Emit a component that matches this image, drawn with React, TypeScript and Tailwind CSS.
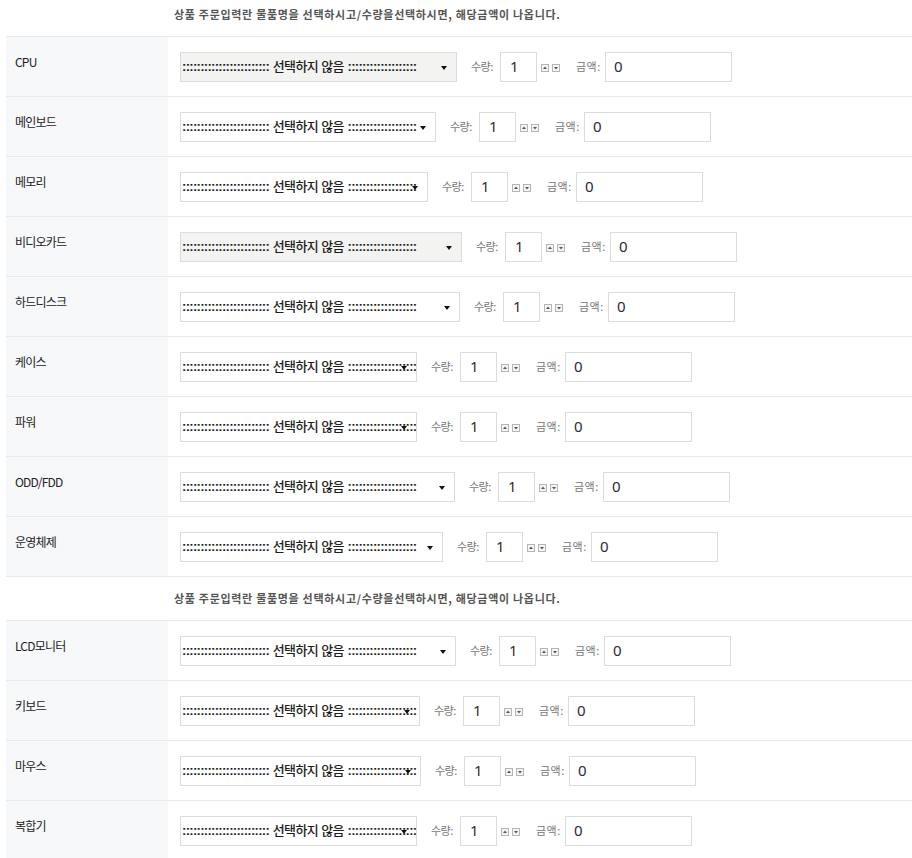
import React from "react";

type Row = { label: string; w: number; gray?: boolean };

const rowsA: Row[] = [
  { label: "CPU", w: 277, gray: true },
  { label: "메인보드", w: 256 },
  { label: "메모리", w: 248 },
  { label: "비디오카드", w: 282, gray: true },
  { label: "하드디스크", w: 280 },
  { label: "케이스", w: 237 },
  { label: "파워", w: 237 },
  { label: "ODD/FDD", w: 275 },
  { label: "운영체제", w: 263 },
];

const rowsB: Row[] = [
  { label: "LCD모니터", w: 276 },
  { label: "키보드", w: 240 },
  { label: "마우스", w: 241 },
  { label: "복합기", w: 237 },
];

const NOTICE = "상품 주문입력란 물품명을 선택하시고/수량을선택하시면, 해당금액이 나옵니다.";

function Spinner() {
  return (
    <div className="flex items-center gap-[3px] mt-[3px]">
      <svg width="8" height="8" viewBox="0 0 8 8">
        <rect x="0.5" y="0.5" width="7" height="7" fill="#f4f4f4" stroke="#b5b5b5" />
        <path d="M2 5 L4 2.6 L6 5 Z" fill="#555" />
      </svg>
      <svg width="8" height="8" viewBox="0 0 8 8">
        <rect x="0.5" y="0.5" width="7" height="7" fill="#f4f4f4" stroke="#b5b5b5" />
        <path d="M2 3 L4 5.4 L6 3 Z" fill="#555" />
      </svg>
    </div>
  );
}

function FakeSelect({ w, gray }: { w: number; gray?: boolean }) {
  return (
    <div
      className={`relative h-[30px] border border-[#dcdcdc] overflow-hidden flex items-center pl-[1px] ${gray ? "bg-[#f3f3f1]" : "bg-white"}`}
      style={{ width: w }}
    >
      <span
        className="whitespace-nowrap text-[13px] text-[#1e1e1e] leading-none"
        style={{ fontFamily: '"Liberation Sans", "Noto Sans CJK KR", sans-serif' }}
      >
        <span className="font-bold tracking-[-0.7px]">::::::::::::::::::::::::</span>{" "}
        <span className="tracking-[-0.6px] font-medium">선택하지 않음</span>{" "}
        <span className="font-bold tracking-[-0.7px]">:::::::::::::::::::</span>
      </span>
      <svg className="absolute top-[13px]" style={{ left: w - 17 }} width="6" height="4" viewBox="0 0 6 4">
        <path d="M0 0 L6 0 L3 4 Z" fill="#111" />
      </svg>
    </div>
  );
}

function ItemRow({ row }: { row: Row }) {
  return (
    <div className="flex h-[60px] border-b border-[#e8e9ee]">
      <div className="w-[162px] bg-[#f7f8fa] pl-[9px] pt-[12px]">
        <span
          className="text-[12px] leading-[18px] text-[#222] tracking-[-0.8px]"
          style={{ fontFamily: '"Noto Sans CJK KR", sans-serif' }}
        >
          {row.label}
        </span>
      </div>
      <div className="flex-1 flex items-center pl-[12px]">
        <FakeSelect w={row.w} gray={row.gray} />
        <div
          className="ml-[14px] w-[29px] text-[11px] text-[#777] tracking-[-0.5px]"
          style={{ fontFamily: '"Noto Sans CJK KR", sans-serif' }}
        >
          수량:
        </div>
        <div
          className="w-[37px] h-[30px] border border-[#dcdcdc] bg-white flex items-center pl-[9px] text-[15px] text-[#3a2a2a]"
          style={{ fontFamily: '"Noto Sans", sans-serif' }}
        >
          1
        </div>
        <div className="ml-[4px] w-[19px]">
          <Spinner />
        </div>
        <div
          className="ml-[16px] w-[29px] text-[11px] text-[#777] tracking-[0.5px]"
          style={{ fontFamily: '"Noto Sans CJK KR", sans-serif' }}
        >
          금액:
        </div>
        <div
          className="w-[127px] h-[30px] border border-[#dcdcdc] bg-white flex items-center pl-[8px] text-[15px] text-[#2a2a3a]"
          style={{ fontFamily: '"Noto Sans", sans-serif' }}
        >
          0
        </div>
      </div>
    </div>
  );
}

function Notice({ tall }: { tall?: boolean }) {
  return (
    <div className={`flex border-b border-[#e8e9ee] ${tall ? "h-[44px] pt-[13px]" : "h-[37px] pt-[6px]"}`}>
      <div className="w-[162px]" />
      <div
        className="pl-[6px] text-[11px] font-bold text-[#555] leading-[16px] tracking-[0.7px] whitespace-nowrap"
        style={{ fontFamily: '"Noto Sans CJK KR", sans-serif' }}
      >
        {NOTICE}
      </div>
    </div>
  );
}

export default function App() {
  return (
    <div className="w-[912px] h-[858px] overflow-hidden bg-white pl-[6px]">
      <Notice />
      {rowsA.map((r) => (
        <ItemRow key={r.label} row={r} />
      ))}
      <Notice tall />
      {rowsB.map((r) => (
        <ItemRow key={r.label} row={r} />
      ))}
    </div>
  );
}
